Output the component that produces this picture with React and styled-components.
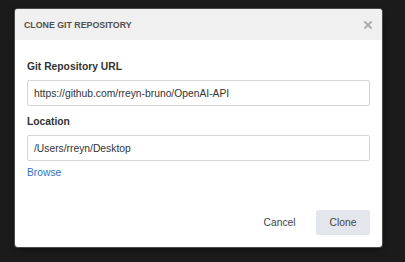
import React from "react";
import styled, { createGlobalStyle } from "styled-components";

const Global = createGlobalStyle`
  html, body {
    margin: 0;
    padding: 0;
    background: #1b1b1b;
    font-family: "Liberation Sans", Arial, sans-serif;
  }
`;

const Backdrop = styled.div`
  width: 405px;
  height: 262px;
  box-sizing: border-box;
  padding: 9px 0 0 15px;
  background: #1b1b1b;
`;

const Dialog = styled.div`
  width: 367px;
  box-sizing: border-box;
  background: #fff;
  border-radius: 3px;
  box-shadow: 0 0 0 1px #4a4a4a, 0 2px 6px rgba(0, 0, 0, 0.5);
  overflow: hidden;
  display: flex;
  flex-direction: column;
`;

const Header = styled.div`
  height: 31px;
  background: #f0f0f0;
  display: flex;
  align-items: center;
  justify-content: space-between;
  padding: 0 7px 0 9px;
`;

const Title = styled.h1`
  margin: 0;
  font-size: 8.8px;
  font-weight: bold;
  color: #505050;
`;

const Close = styled.button`
  border: 0;
  background: none;
  padding: 0;
  width: 14px;
  height: 14px;
  display: flex;
  align-items: center;
  justify-content: center;
  cursor: pointer;
`;

const Body = styled.div`
  padding: 20px 12px 0 12px;
  display: flex;
  flex-direction: column;
`;

const Label = styled.label`
  font-size: 10.3px;
  line-height: 14px;
  font-weight: bold;
  color: #333;
  margin-top: ${(p) => (p.$first ? "0" : "9px")};
  margin-bottom: 6px;
`;

const Input = styled.input`
  height: 26px;
  box-sizing: border-box;
  border: 1px solid #d4d4d4;
  border-radius: 2px;
  padding: 0 6px;
  font-family: "Liberation Sans", Arial, sans-serif;
  font-size: 10.3px;
  color: #333;
  outline: none;
`;

const Link = styled.a`
  margin-top: 5px;
  font-size: 10.3px;
  line-height: 14px;
  color: #2f72c4;
  text-decoration: none;
  align-self: flex-start;
  cursor: pointer;
`;

const Footer = styled.div`
  display: flex;
  justify-content: flex-end;
  gap: 7px;
  padding: 30px 12px 12px 12px;
`;

const Button = styled.button`
  height: 25px;
  padding: 0 13.5px;
  border: 0;
  border-radius: 2px;
  font-family: "Liberation Sans", Arial, sans-serif;
  font-size: 10.3px;
  color: #444;
  background: ${(p) => (p.$primary ? "#e3e6ea" : "transparent")};
  cursor: pointer;
`;

export default function App() {
  return (
    <>
      <Global />
      <Backdrop>
        <Dialog>
          <Header>
            <Title>CLONE GIT REPOSITORY</Title>
            <Close aria-label="Close">
              <svg width="8" height="8" viewBox="0 0 8 8">
                <path d="M1 1L7 7M7 1L1 7" stroke="#a8a8a8" strokeWidth="1.8" strokeLinecap="square" />
              </svg>
            </Close>
          </Header>
          <Body>
            <Label $first>Git Repository URL</Label>
            <Input defaultValue="https://github.com/rreyn-bruno/OpenAI-API" />
            <Label>Location</Label>
            <Input defaultValue="/Users/rreyn/Desktop" />
            <Link>Browse</Link>
          </Body>
          <Footer>
            <Button>Cancel</Button>
            <Button $primary>Clone</Button>
          </Footer>
        </Dialog>
      </Backdrop>
    </>
  );
}
